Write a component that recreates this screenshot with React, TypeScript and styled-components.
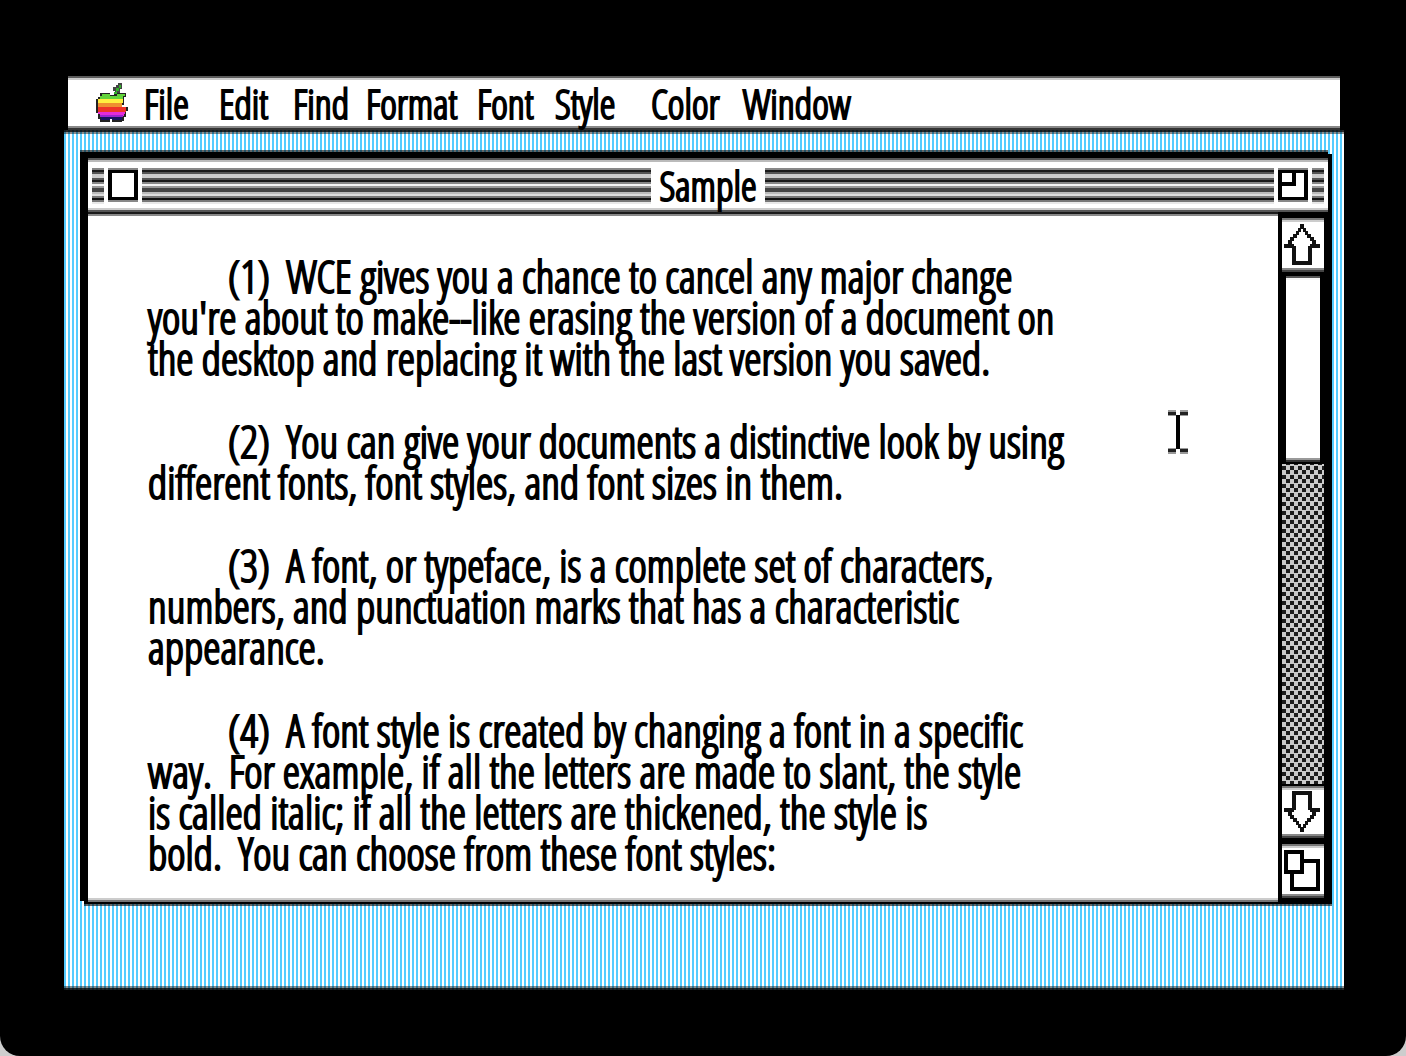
import React from "react";
import styled, { createGlobalStyle, css } from "styled-components";

const face = css`
  font-family: "Open Sans Condensed Light", "Open Sans Condensed", "Liberation Sans", sans-serif;
  font-size: 44px;
  line-height: 41px;
  color: #000;
  font-kerning: none;
  font-variant-ligatures: none;
  -webkit-text-stroke: 2px #000;
  white-space: nowrap;
`;

const GlobalStyle = createGlobalStyle`
  *, *::before, *::after { box-sizing: border-box; }
  html { background: #cdcdcd; }
  body { margin: 0; }
  button { appearance: none; margin: 0; padding: 0; border: 0; background: none; }
  svg { display: block; }
`;

const Monitor = styled.div`
  min-height: 100vh;
  display: flex;
  flex-direction: column;
  padding: 76px 62px 66px 64px;
  background: #000;
  border-radius: 0 0 20px 20px;
  overflow: hidden;
`;

const MenuBar = styled.nav`
  height: 54px;
  margin: 0 4px;
  padding-left: 28px;
  display: flex;
  align-items: center;
  background: linear-gradient(
    #5c5c5c 0 2px, #ccc 2px 4px, #fff 4px 50px, #888 50px 52px, #333 52px 54px
  );
`;

const AppleButton = styled.button`
  width: 48px;
  height: 46px;
`;

const MenuList = styled.div`
  display: grid;
  grid-template-columns: 75px 74px 73px 111px 78px 96px 92px 100px;
`;

const MenuItem = styled.button`
  ${face}
  font-size: 40px;
  text-align: left;
`;

const Desktop = styled.main`
  flex: 1;
  display: flex;
  padding: 20px 12px 84px 16px;
  background:
    linear-gradient(rgba(0, 0, 0, 0.85) 0 2px, rgba(0, 0, 0, 0.45) 2px 4px, transparent 4px) top / 100% 4px no-repeat,
    linear-gradient(rgba(0, 0, 0, 0.45) 0 2px, rgba(0, 0, 0, 0.85) 2px 4px) bottom / 100% 4px no-repeat,
    repeating-linear-gradient(90deg, #55ccff 0 2px, #fff 2px 4px);
`;

const Window = styled.section`
  flex: 1;
  display: flex;
  flex-direction: column;
  padding: 8px 0 2px 8px;
  background: linear-gradient(rgba(0, 0, 0, 0.6) 0 2px, #000 2px calc(100% - 2px), rgba(0, 0, 0, 0.6) calc(100% - 2px));
  clip-path: polygon(0 0, calc(100% - 4px) 0, calc(100% - 4px) 4px, 100% 4px, 100% 100%, 4px 100%, 4px calc(100% - 5px), 0 calc(100% - 5px));
`;

const TitleBar = styled.header`
  height: 54px;
  margin-right: 4px;
  padding: 10px 4px 0;
  display: flex;
  align-items: flex-start;
  gap: 4px;
  background: linear-gradient(#555 0 2px, #bbb 2px 4px, #fff 4px 50px, #ccc 50px 52px, #555 52px);
`;

const Stripes = styled.span<{ $width?: number }>`
  height: 36px;
  flex: ${(p) => (p.$width ? `0 0 ${p.$width}px` : "1 1 0")};
  background: linear-gradient(
    #888 0 2px, #1a1a1a 2px 4px, #555 4px 6px, #ccc 6px 10px, #555 10px 12px,
    #1a1a1a 12px 14px, #888 14px 16px, #f5f5f5 16px 18px, #999 18px 20px, #444 20px 22px,
    #444 22px 24px, #bbb 24px 26px, #ddd 26px 28px, #777 28px 30px, #111 30px 32px,
    #777 32px 34px, #e8e8e8 34px 36px
  );
`;

const BoxButton = styled.button`
  width: 30px;
  height: 36px;
`;

const Title = styled.h1`
  ${face}
  margin: 0;
  width: 106px;
  height: 36px;
  font-size: 40px;
  line-height: 36px;
  font-weight: 400;
  text-align: center;
`;

const Body = styled.div`
  flex: 1;
  display: grid;
  grid-template-columns: minmax(0, 1fr) 54px;
`;

const Page = styled.article`
  position: relative;
  padding: 44px 60px 0;
  background: linear-gradient(
    #1a1a1a 0 2px, #888 2px 4px, #fff 4px calc(100% - 6px), #ccc calc(100% - 6px) calc(100% - 4px), #777 calc(100% - 4px) calc(100% - 2px), #000 calc(100% - 2px)
  );
`;

const Paragraph = styled.p`
  ${face}
  margin: 0 0 42px;
  text-indent: 80px;
  white-space: pre-wrap;

  &:last-of-type {
    margin-bottom: 0;
  }
`;

const Pointer = styled.svg`
  position: absolute;
  left: 1080px;
  top: 198px;
`;

const ScrollBar = styled.aside`
  display: flex;
  flex-direction: column;
  padding: 6px 8px 6px 4px;
  background: #000;
`;

const ArrowButton = styled.button<{ $height: number }>`
  height: ${(p) => p.$height}px;
  background: linear-gradient(
    #777 0 2px, #ccc 2px 4px, #fff 4px calc(100% - 4px), #888 calc(100% - 4px) calc(100% - 2px), #444 calc(100% - 2px)
  );
`;

const Track = styled.div`
  flex: 1;
  margin-bottom: 2px;
  background: conic-gradient(#1c1c1c 25%, #cacaca 0 50%, #1c1c1c 0 75%, #cacaca 0) 0 0 / 8px 9px;
`;

const Thumb = styled.button`
  display: block;
  width: 100%;
  height: 192px;
  border: 4px solid #000;
  border-bottom-width: 2px;
  background: linear-gradient(#555 0 2px, #f5f5f5 2px 4px, #fff 4px calc(100% - 4px), #999 calc(100% - 4px) calc(100% - 2px), #333 calc(100% - 2px));
`;

const GrowButton = styled(ArrowButton)`
  margin-top: 6px;
`;

const Apple = () => (
  <svg width="32" height="40" viewBox="0 0 96 120" shapeRendering="crispEdges" aria-hidden="true">
    <path fill="#444" d="M66 0h12v18h-6v12h-6v6h-9V24h-6V12h9V6h6z" />
    <path fill="#222" d="M18 30h24v6h12v-6h36v12h-6v24h-6v6h18v12h-6v18h-6v12h-6v4H12v-10H6V90H0V48h6v-6h6V30z" />
    <path fill="#32b02a" d="M69 6h6v8h-6v10h-6v8h-8v-6h6V14h8z" />
    <path fill="#62d33b" d="M18 32h24v6h20v-6h24v8h-6v10H12V40h6z" />
    <path fill="#ffef40" d="M6 48h76v12H6z" />
    <path fill="#ef8f30" d="M6 60h72v12H6z" />
    <path fill="#ee3328" d="M6 72h84v14H6z" />
    <path fill="#e32cdb" d="M6 86h82v6h-4v6H12v-6H6z" />
    <path fill="#9b24cf" d="M12 96h70v6H12z" />
    <path fill="#181360" d="M14 102h64v10H14z" />
    <path fill="#fff" d="M42 108h6v8h-6zM42 24h6v12h-6z" />
  </svg>
);

const ArrowShape = ({ down }: { down?: boolean }) => (
  <svg width="42" height="54" viewBox="0 0 42 54" shapeRendering="crispEdges" aria-hidden="true">
    <g transform={down ? "translate(0 51) scale(1 -1)" : "translate(0 1)"}>
      <path
        fill="#111"
        d="M18 5h4v5h-4zM16 9h3v4h-3zM21 9h3v4h-3zM14 12h3v4h-3zM23 12h3v4h-3zM11 15h4v4h-4zM25 15h4v4h-4zM8 18h4v4H8zM28 18h4v4h-4zM6 21h4v5H6zM30 21h4v5h-4zM2 25h10v4H2zM28 25h10v4H28zM10 27h4v19h-4zM26 27h4v19h-4zM10 42h20v4H10z"
      />
    </g>
  </svg>
);

const paragraphs = [
  "(1)  WCE gives you a chance to cancel any major change\nyou're about to make--like erasing the version of a document on\nthe desktop and replacing it with the last version you saved.",
  "(2)  You can give your documents a distinctive look by using\ndifferent fonts, font styles, and font sizes in them.",
  "(3)  A font, or typeface, is a complete set of characters,\nnumbers, and punctuation marks that has a characteristic\nappearance.",
  "(4)  A font style is created by changing a font in a specific\nway.  For example, if all the letters are made to slant, the style\nis called italic; if all the letters are thickened, the style is\nbold.  You can choose from these font styles:",
];

const menus = ["File", "Edit", "Find", "Format", "Font", "Style", "Color", "Window"];

export default function App() {
  return (
    <>
      <GlobalStyle />
      <Monitor>
        <MenuBar>
          <AppleButton aria-label="Apple menu"><Apple /></AppleButton>
          <MenuList>
            {menus.map((m) => <MenuItem key={m}>{m}</MenuItem>)}
          </MenuList>
        </MenuBar>
        <Desktop>
          <Window>
            <TitleBar>
              <Stripes $width={12} />
              <BoxButton aria-label="Close">
                <svg width="30" height="36" shapeRendering="crispEdges" aria-hidden="true">
                  <path fill="#888" d="M0 0h30v34H0z" />
                  <path d="M0 2h30v30H0z" />
                  <path fill="#fff" d="M4 5h22v24H4z" />
                </svg>
              </BoxButton>
              <Stripes />
              <Title>Sample</Title>
              <Stripes />
              <BoxButton aria-label="Zoom">
                <svg width="30" height="36" shapeRendering="crispEdges" aria-hidden="true">
                  <path fill="#888" d="M0 0h30v34H0z" />
                  <path d="M0 2h30v30H0z" />
                  <path fill="#fff" d="M4 5h22v24H4z" />
                  <path d="M14 4h4v14H4v-4h10z" />
                </svg>
              </BoxButton>
              <Stripes $width={12} />
            </TitleBar>
            <Body>
              <Page>
                {paragraphs.map((p) => <Paragraph key={p}>{p}</Paragraph>)}
                <Pointer width="20" height="44" viewBox="0 0 20 44" shapeRendering="crispEdges" aria-hidden="true">
                  <path fill="#999" d="M0 0h8v6H0zM12 0h8v6h-8zM0 38h8v6H0zM12 38h8v6h-8z" />
                  <path fill="#222" d="M0 2h8v3H0zM12 2h8v3h-8zM0 39h8v3H0zM12 39h8v3h-8z" />
                  <path d="M8 5h4v34H8z" />
                </Pointer>
              </Page>
              <ScrollBar>
                <ArrowButton $height={54} aria-label="Scroll up"><ArrowShape /></ArrowButton>
                <Track><Thumb aria-label="Scroll position" /></Track>
                <ArrowButton $height={52} aria-label="Scroll down"><ArrowShape down /></ArrowButton>
                <GrowButton $height={54} aria-label="Resize window">
                  <svg width="42" height="54" shapeRendering="crispEdges" aria-hidden="true">
                    <path d="M8 15h30v32H8z" />
                    <path fill="#fff" d="M12 19h22v24H12z" />
                    <path d="M2 6h20v24H2z" />
                    <path fill="#fff" d="M6 10h12v16H6z" />
                  </svg>
                </GrowButton>
              </ScrollBar>
            </Body>
          </Window>
        </Desktop>
      </Monitor>
    </>
  );
}
